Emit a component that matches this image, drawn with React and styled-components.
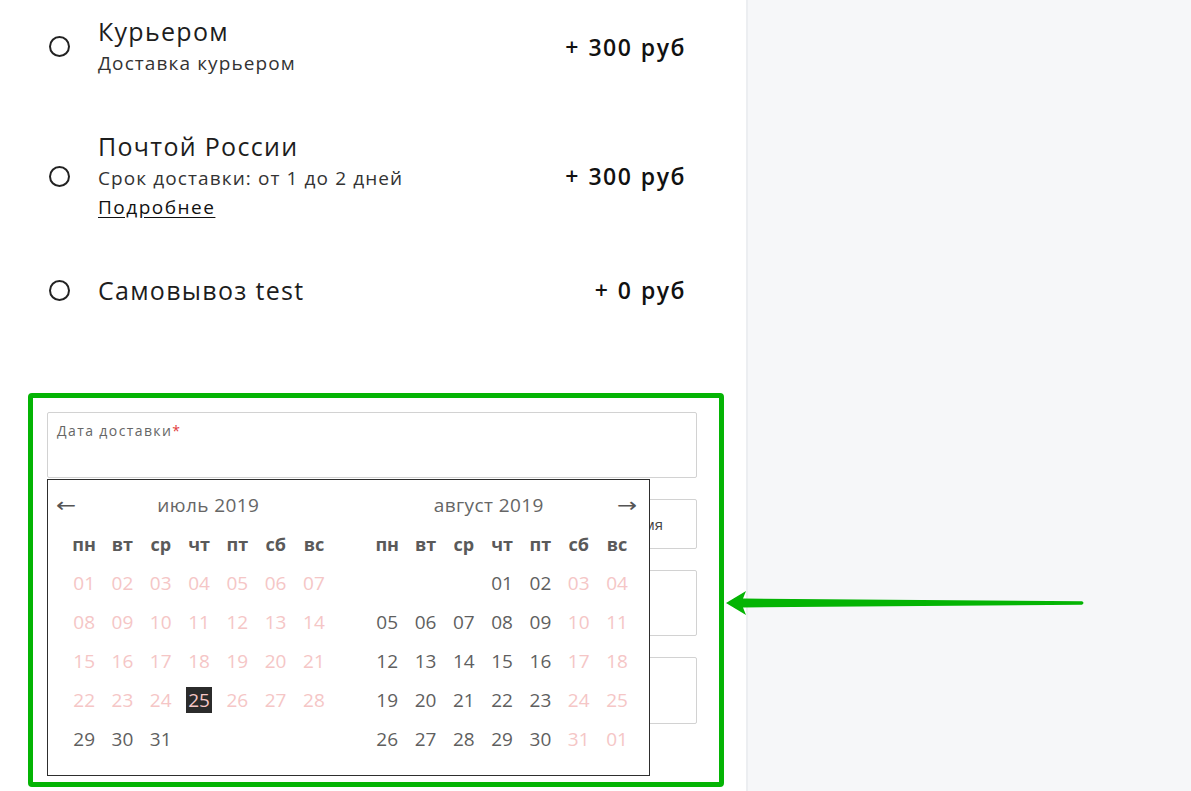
import React from 'react'
import styled, { createGlobalStyle } from 'styled-components'

const GlobalStyle = createGlobalStyle`
  html, body {
    margin: 0;
    padding: 0;
  }
  body {
    font-family: "Open Sans", "Liberation Sans", sans-serif;
    color: #1a1a1a;
  }
`

const Page = styled.div`
  position: relative;
  display: flex;
  height: 791px;
  overflow: hidden;
`

const Main = styled.main`
  width: 746px;
  flex-shrink: 0;
  background: #fff;
`

const Aside = styled.aside`
  flex: 1;
  background: #f6f7f9;
  border-left: 2px solid #eceef1;
`

const Options = styled.ul`
  display: flex;
  flex-direction: column;
  gap: 52px;
  margin: 0;
  padding: 15px 61px 0 49px;
  list-style: none;
`

const Option = styled.li`
  display: grid;
  grid-template-columns: 20px 1fr auto;
  column-gap: 29px;
  align-items: center;
`

const Radio = styled.span`
  width: 21px;
  height: 21px;
  box-sizing: border-box;
  border: 2.6px solid #222;
  border-radius: 50%;
`

const Title = styled.div`
  font-size: 25px;
  line-height: 32px;
  color: #1d1d1d;
  letter-spacing: 1.3px;

  &:not(:last-child) {
    margin-bottom: 2px;
  }
`

const Sub = styled.div`
  font-size: 19px;
  line-height: 29px;
  color: #333;
  letter-spacing: 1.1px;
`

const More = styled.a`
  display: block;
  font-size: 19px;
  line-height: 29px;
  color: #111;
  letter-spacing: 1.5px;
  text-decoration: underline;
  text-underline-offset: 3px;
`

const Price = styled.div`
  margin-right: -1px;
  font-size: 23px;
  font-weight: 600;
  color: #111;
  letter-spacing: 1.5px;
  word-spacing: 1px;
`

const Highlight = styled.section`
  width: 696px;
  height: 394px;
  box-sizing: border-box;
  margin: 87px 0 0 28px;
  padding: 14px 22px 0 14px;
  border: 5px solid #04b404;
  border-radius: 4px;
`

const Fields = styled.div`
  display: flex;
  flex-direction: column;
  gap: 21px;
`

const Field = styled.div`
  position: relative;
  display: flex;
  align-items: ${p => (p.$top ? 'flex-start' : 'center')};
  justify-content: ${p => (p.$end ? 'flex-end' : 'flex-start')};
  height: ${p => p.$h}px;
  box-sizing: border-box;
  padding: 10px ${p => (p.$end ? 33 : 9)}px 10px 9px;
  border: 1px solid #d2d2d2;
  border-radius: 2px;
  background: #fff;
`

const Label = styled.span`
  font-size: 14px;
  line-height: 16px;
  color: #666;
  letter-spacing: 1.4px;

  b {
    font-weight: 400;
    color: #e23b3b;
    margin-left: 0;
  }
`

const Value = styled.span`
  font-size: 15px;
  color: #444;
`

const Calendar = styled.div`
  position: absolute;
  top: calc(100% + 2px);
  left: -1px;
  z-index: 2;
  width: 603px;
  box-sizing: border-box;
  padding: 5px 0 17px;
  border: 1px solid #2e2e2e;
  background: #fff;
`

const CalHeader = styled.div`
  display: flex;
  align-items: center;
  height: 39px;
  padding: 0 10px;
`

const Nav = styled.span`
  width: 20px;
  font-family: "DejaVu Sans", sans-serif;
  font-size: 20px;
  line-height: 20px;
  color: #555;
  transform: scaleX(1.2);
`

const MonthTitle = styled.span`
  flex: 1;
  text-align: center;
  font-size: 19px;
  color: #666;
  letter-spacing: 0.4px;
  padding-right: ${p => p.$shift || 0}px;
  padding-left: ${p => p.$shiftRight || 0}px;
`

const Months = styled.div`
  display: flex;
  gap: 35px;
  padding-left: 17px;
`

const Grid = styled.div`
  display: grid;
  grid-template-columns: repeat(7, 38.3px);
  grid-auto-rows: 39px;
`

const Weekday = styled.span`
  display: flex;
  align-items: center;
  justify-content: center;
  font-size: 18px;
  font-weight: 700;
  color: #5a5a5a;
`

const Day = styled.span`
  display: flex;
  align-items: center;
  justify-content: center;
  font-size: 19px;
  color: ${p => (p.$off ? '#f5c6c6' : '#5f5f5f')};

  span {
    display: flex;
    align-items: center;
    justify-content: center;
    width: 26px;
    height: 26px;
    background: ${p => (p.$sel ? '#2b2b2b' : 'transparent')};
  }
`

const Pointer = styled.svg`
  position: absolute;
  left: 724px;
  top: 588px;
`

const weekdays = ['пн', 'вт', 'ср', 'чт', 'пт', 'сб', 'вс']

const pad = n => String(n).padStart(2, '0')

// july 2019: everything before 29 is disabled, 25 is selected
const july = Array.from({ length: 31 }, (_, i) => ({
  n: i + 1,
  off: i + 1 < 29,
  sel: i + 1 === 25,
}))

const august = [
  null, null, null,
  ...Array.from({ length: 31 }, (_, i) => {
    const dow = (i + 3) % 7
    return { n: i + 1, off: dow >= 5 }
  }),
  { n: 1, off: true },
]

const Month = ({ days }) => (
  <Grid>
    {weekdays.map(w => <Weekday key={w}>{w}</Weekday>)}
    {days.map((d, i) =>
      d ? (
        <Day key={i} $off={d.off} $sel={d.sel}>
          <span>{pad(d.n)}</span>
        </Day>
      ) : (
        <Day key={i} />
      )
    )}
  </Grid>
)

export default function App() {
  return (
    <Page>
      <GlobalStyle />
      <Main>
        <Options>
          <Option>
            <Radio />
            <div>
              <Title>Курьером</Title>
              <Sub>Доставка курьером</Sub>
            </div>
            <Price>+ 300 руб</Price>
          </Option>
          <Option>
            <Radio />
            <div>
              <Title>Почтой России</Title>
              <Sub>Срок доставки: от 1 до 2 дней</Sub>
              <More href="#">Подробнее</More>
            </div>
            <Price>+ 300 руб</Price>
          </Option>
          <Option>
            <Radio />
            <div>
              <Title>Самовывоз test</Title>
            </div>
            <Price>+ 0 руб</Price>
          </Option>
        </Options>

        <Highlight>
          <Fields>
            <Field $h={66} $top>
              <Label>Дата доставки<b>*</b></Label>
              <Calendar>
                <CalHeader>
                  <Nav>←</Nav>
                  <MonthTitle $shift={10}>июль 2019</MonthTitle>
                  <MonthTitle $shiftRight={10}>август 2019</MonthTitle>
                  <Nav>→</Nav>
                </CalHeader>
                <Months>
                  <Month days={july} />
                  <Month days={august} />
                </Months>
              </Calendar>
            </Field>
            <Field $h={50} $end>
              <Value>Любое время</Value>
            </Field>
            <Field $h={66} />
            <Field $h={67} />
          </Fields>
        </Highlight>
      </Main>
      <Aside />

      <Pointer width="364" height="30" viewBox="0 0 364 30">
        <path
          d="M2 15 L22 3 L19 10.5 L358 13.3 Q361 15 358 16.7 L19 19.5 L22 27 Z"
          fill="#04b404"
        />
      </Pointer>
    </Page>
  )
}
